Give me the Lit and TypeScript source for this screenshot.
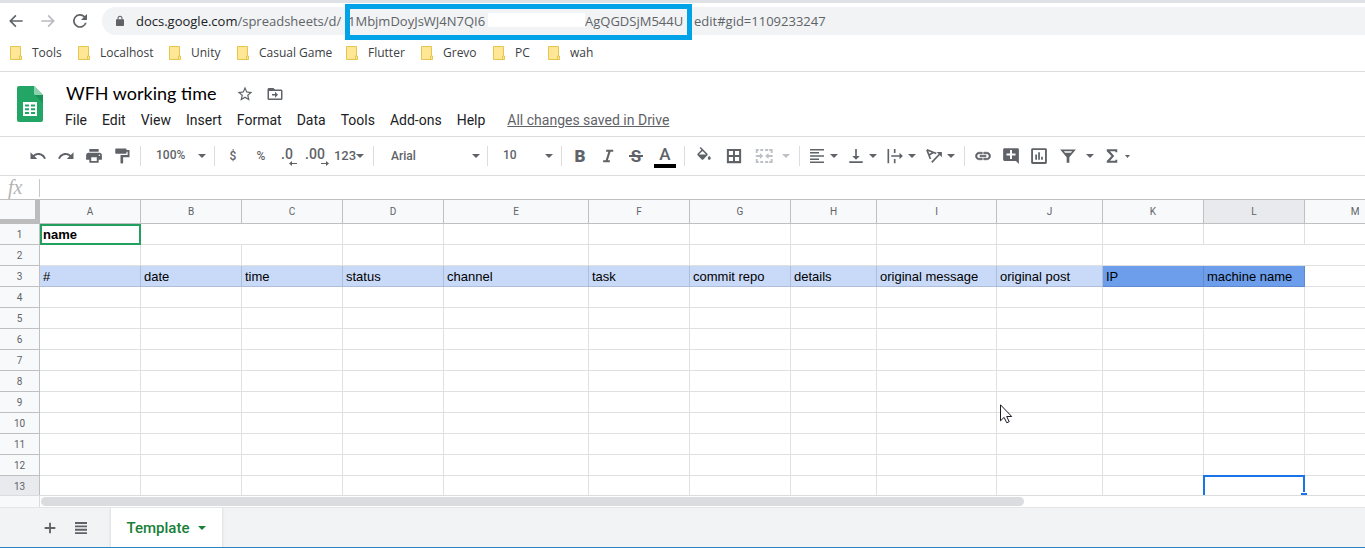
import { LitElement, html, css, svg, nothing } from "lit";
import { customElement, property } from "lit/decorators.js";

const glyphs: Record<string, unknown> = {
  undo: svg`<path d="M12.5 8c-2.65 0-5.05.99-6.9 2.6L2 7v9h9l-3.62-3.62c1.39-1.16 3.16-1.88 5.12-1.88 3.54 0 6.55 2.31 7.6 5.5l2.37-.78C21.08 11.03 17.15 8 12.500 8z"/>`,
  redo: svg`<path d="M18.4 10.6C16.55 8.99 14.15 8 11.5 8c-4.65 0-8.58 3.03-9.96 7.22L3.9 16c1.05-3.19 4.05-5.5 7.6-5.5 1.95 0 3.73.72 5.12 1.88L13 16h9V7l-3.6 3.6z"/>`,
  print: svg`<path d="M19.500 7.500h-15C2.800 7.500 1.500 8.900 1.500 10.500v6.500h4.300v4h12.400v-4h4.300v-6.500c0-1.600-1.300-3-3-3zM15.700 18.700H8.300v-5h7.400v5zM19.200 12c-.6 0-1-.5-1-1s.4-1 1-1 1 .5 1 1-.4 1-1 1zM18.200 2.500H5.800v3.700h12.400V2.500z"/>`,
  paint: svg`<path d="M18 4V3c0-.55-.45-1-1-1H4c-.55 0-1 .45-1 1v5c0 .55.45 1 1 1h13c.55 0 1-.45 1-1V6.300h1.500V10.700H10V21c0 .55.45 1 1 1h1.500c.55 0 1-.45 1-1v-7.500H22V4h-4z"/>`,
  italic: svg`<path d="M9.500 3.500v2.800h3l-3.600 11.200H5.500v2.800h9v-2.800h-2.700l3.600-11.200H19V3.500z"/>`,
  fill: svg`<path d="M16.56 8.94L7.62 0 6.21 1.41l2.38 2.38-5.15 5.15c-.59.59-.59 1.54 0 2.12l5.5 5.5c.29.29.68.44 1.06.44s.77-.15 1.06-.44l5.5-5.5c.59-.58.59-1.53 0-2.12zM5.21 10L10 5.21 14.79 10H5.21zM19 11.5s-2 2.17-2 3.5c0 1.1.9 2 2 2s2-.9 2-2c0-1.33-2-3.5-2-3.5z"/>`,
  borders: svg`<path d="M2.5 2.5v19h19v-19h-19zm8.2 16.3H5.2v-5.5h5.5v5.5zm0-8.1H5.2V5.2h5.5v5.5zm8.1 8.1h-5.5v-5.5h5.5v5.5zm0-8.1h-5.5V5.2h5.5v5.5z"/>`,
  merge: svg`<path d="M1 2.700h4v2.600H3.500V8H1zM7 2.700h4v2.600H7zM13.500 2.700h4v2.600h-4zM19 2.700h4.500V8H21V5.300h-2zM1 16h2.500v2.700H5v2.600H1zM7 18.700h4v2.600H7zM13.500 18.700h4v2.600h-4zM21 16h2.500v5.300H19v-2.600h2zM1 10.800h5.500V8L11 12l-4.500 4v-2.800H1zM23.500 10.800H18V8l-4.500 4 4.500 4v-2.800h5.500z"/>`,
  align: svg`<path d="M2.700 2.700h18.600v2H2.700zM2.700 6.800h12v2h-12zM2.700 11h18.600v2H2.700zM2.700 15.200h12v2h-12zM2.700 19.300h18.600v2H2.700z"/>`,
  valign: svg`<path d="M3 19h18v2.300H3zM10.900 2.500h2.200V12H17l-5 5-5-5h3.900z"/>`,
  wrap: svg`<path d="M2 2.500h2.200v19H2zM10.500 2.500h2.200V8h-2.200zM10.500 16h2.200v5.500h-2.200zM7 10.900h11V7.700l4.500 4.300-4.500 4.300v-3.200H7z"/>`,
  rotate: svg`<path fill="none" stroke="currentColor" stroke-width="2.2" d="M9 20.500L20 9M2.500 3.800L15 8.600M2.500 3.800L7.300 16M5 11L11.500 7"/><path d="M15.500 6.500H22.500v7z"/>`,
  link: svg`<path d="M3.9 12c0-1.71 1.39-3.1 3.1-3.1h4V7H7c-2.76 0-5 2.24-5 5s2.24 5 5 5h4v-1.9H7c-1.71 0-3.1-1.39-3.1-3.1zM8 13h8v-2H8v2zm9-6h-4v1.9h4c1.71 0 3.1 1.39 3.1 3.1s-1.39 3.1-3.1 3.1h-4V17h4c2.76 0 5-2.24 5-5s-2.24-5-5-5z" stroke="currentColor" stroke-width=".9"/>`,
  comment: svg`<path d="M22.5 3c0-1-.8-1.500-1.800-1.500H3.300c-1 0-1.800.8-1.800 1.800v13.400c0 1 .8 1.800 1.800 1.800H18.500l4 4zM18 11.300h-4.700V16h-2.600v-4.700H6V8.700h4.700V4h2.600v4.700H18z"/>`,
  chart: svg`<path d="M3.300 1.500h17.400c1 0 1.800.8 1.800 1.800v17.400c0 1-.8 1.800-1.800 1.800H3.300c-1 0-1.800-.8-1.800-1.800V3.300c0-1 .8-1.800 1.800-1.800zM4 4v16h16V4zM7 10h2.300v7H7zM10.900 7h2.300v10h-2.300zM14.800 13h2.300v4h-2.300z"/>`,
  filter: svg`<path fill-rule="evenodd" d="M1.500 3.200h21l-8.700 10.300V21h-3.600v-7.500zM6.500 5.600l1.600 1.900h7.800l1.600-1.900z"/>`,
  sigma: svg`<path d="M5 3h14v4h-2.500V5.700H9.300l5.700 6.300-5.700 6.300h7.200V17H19v4H5v-2.500l6.300-6.500L5 5.500z"/>`,
  star: svg`<path d="M22 9.240l-7.190-.62L12 2 9.190 8.630 2 9.240l5.460 4.730L5.820 21 12 17.270 18.180 21l-1.630-7.030L22 9.240zM12 15.400l-3.760 2.270 1-4.280-3.320-2.880 4.380-.38L12 6.100l1.710 4.040 4.380.38-3.320 2.880 1 4.280L12 15.400z"/>`,
  folder: svg`<path d="M20 6h-8l-2-2H4c-1.100 0-2 .9-2 2v12c0 1.100.9 2 2 2h16c1.100 0 2-.9 2-2V8c0-1.100-.9-2-2-2zm0 12H4V8h16v10zM12 17l4-4-4-4v3H8v2h4z"/>`,
  back: svg`<path d="M22 10.800H6.300l6.400-6.400L11 2.700 1.700 12l9.300 9.300 1.700-1.700-6.400-6.400H22z"/>`,
  forward: svg`<path d="M2 10.800h15.700l-6.400-6.400L13 2.700l9.300 9.300-9.300 9.300-1.700-1.700 6.400-6.400H2z"/>`,
  reload: svg`<path d="M19.400 4.600A10.400 10.400 0 1 0 22 14.500h-2.700A7.800 7.800 0 1 1 17.500 6.500L13.500 10.500H22.500V1.500z"/>`,
  lock: svg`<path fill-rule="evenodd" d="M18 8.500h-1V6.500a5 5 0 0 0-10 0v2H6c-1.100 0-2 .9-2 2v9.500c0 1.100.9 2 2 2h12c1.100 0 2-.9 2-2v-9.500c0-1.100-.9-2-2-2zM9 8.500v-2a3 3 0 0 1 6 0v2z"/>`,
  plus: svg`<path d="M20 13.400h-6.600V20h-2.800v-6.600H4v-2.800h6.600V4h2.800v6.600H20z"/>`,
  sheets: svg`<path d="M4 4h16v2.500H4zM4 8.500h16V11H4zM4 13h16v2.500H4zM4 17.500h16V20H4z"/>`,
};

@customElement("ui-icon")
export class UiIcon extends LitElement {
  @property() name = "";
  @property({ type: Number }) size = 18;
  static styles = css`
    :host { display: inline-flex; flex: none; }
    svg { display: block; fill: currentColor; }
  `;
  render() {
    return html`<svg viewBox="0 0 24 24" width=${this.size} height=${this.size} aria-hidden="true">${glyphs[this.name]}</svg>`;
  }
}

const caret = html`<svg class="caret" viewBox="0 0 8 4" width="8" height="4" aria-hidden="true"><path d="M0 0h8L4 4z" fill="currentColor"/></svg>`;
const smallCaret = html`<svg class="caret" viewBox="0 0 5 3" width="5" height="3" aria-hidden="true"><path d="M0 0h5L2.500 3z" fill="currentColor"/></svg>`;

@customElement("browser-bar")
export class BrowserBar extends LitElement {
  static styles = css`
    :host { display: block; border-top: 3px solid #dee1e6; border-bottom: 1px solid #dadce0; font-family: "Open Sans", "Noto Sans", sans-serif; color: #5f6368; }
    button { border: 0; background: none; padding: 0; color: inherit; width: 32px; height: 28px; display: flex; align-items: center; justify-content: center; }
    button:disabled { color: #b9bbbe; }
    .nav { display: flex; align-items: center; padding: 4px 0 3px; }
    .omnibox { flex: 1; display: flex; align-items: center; height: 28px; margin-left: 6px; padding-left: 12px; border-radius: 14px 0 0 14px; background: #f1f3f4; }
    .url { display: flex; margin-left: 10px; font-size: 13px; line-height: 20px; white-space: pre; }
    .base { width: 212px; }
    .host { color: #202124; }
    .key { position: relative; display: grid; grid-template-columns: 140px 97px 104px; width: 341px; }
    .key span { min-width: 0; overflow: hidden; }
    .blank { background: #fff; height: 14px; margin-top: 2px; }
    .frame { position: absolute; inset: -7px -3px -9px; border: 5px solid #00a2e8; }
    .rest { padding-left: 5px; }
    nav { display: grid; grid-template-columns: 68px 91px 68px 109px 75px 72px 55px auto; padding: 4px 10px 0; height: 29px; }
    a { display: flex; align-items: center; gap: 10px; height: 22px; font-size: 12px; line-height: 16px; color: #3c4043; text-decoration: none; white-space: nowrap; }
  `;
  render() {
    return html`
      <div class="nav">
        <button aria-label="Back"><ui-icon name="back" size="16"></ui-icon></button>
        <button aria-label="Forward" disabled><ui-icon name="forward" size="16"></ui-icon></button>
        <button aria-label="Reload"><ui-icon name="reload" size="16"></ui-icon></button>
        <div class="omnibox">
          <ui-icon name="lock" size="12"></ui-icon>
          <div class="url"><span class="base"><span class="host">docs.google.com</span>/spreadsheets/d/</span><span class="key"><span>1MbjmDoyJsWJ4N7QI6</span><span class="blank"></span><span>AgQGDSjM544U</span><i class="frame"></i></span><span class="rest">edit#gid=1109233247</span></div>
        </div>
      </div>
      <nav aria-label="Bookmarks">
        ${["Tools", "Localhost", "Unity", "Casual Game", "Flutter", "Grevo", "PC", "wah"].map(
          (name) => html`<a href="#"><svg width="12" height="14" viewBox="0 0 12 14" aria-hidden="true"><path d="M.5.500h10v9.500h1v3.500H.5z" fill="#ffe795" stroke="#e6c54d"/><path d="M9.500 13v-3h1" fill="none" stroke="#e6c54d"/></svg>${name}</a>`
        )}
      </nav>
    `;
  }
}

@customElement("doc-header")
export class DocHeader extends LitElement {
  static styles = css`
    :host { display: flex; height: 64px; border-bottom: 1px solid #dadce0; font-family: Roboto, sans-serif; color: #202124; }
    .logo { margin: 14px 15px 0 17px; flex: none; }
    .body { display: flex; flex-direction: column; padding-top: 8px; }
    .title { display: flex; align-items: center; height: 28px; color: #5f6368; }
    input { width: 172px; border: 0; padding: 0 0 2px 8px; background: none; font: 18px/24px Lato, sans-serif; color: #000; box-sizing: border-box; }
    button { border: 0; background: none; padding: 0; color: inherit; font: inherit; }
    .title button { width: 30px; display: flex; align-items: center; justify-content: center; }
    .menu { display: flex; align-items: center; gap: 1px; height: 24px; font-size: 14px; line-height: 20px; }
    .menu button { padding: 0 7px; }
    .menu a { margin-left: 14px; color: #5f6368; }
  `;
  render() {
    return html`
      <svg class="logo" width="26" height="36" viewBox="0 0 26 36" aria-label="Sheets home">
        <path d="M2 0h15l9 9v25a2 2 0 0 1-2 2H2a2 2 0 0 1-2-2V2a2 2 0 0 1 2-2z" fill="#23a566"/>
        <path d="M18 9h8v8z" fill="#1c9156"/><path d="M17 0l9 9h-7.500a1.500 1.500 0 0 1-1.500-1.500z" fill="#8ed1b1"/>
        <path fill-rule="evenodd" d="M6 16h14v14H6zM8 18.500h4v2H8zM14 18.500h4v2h-4zM8 22.300h4v2H8zM14 22.300h4v2h-4zM8 26h4v2H8zM14 26h4v2h-4z" fill="#fff"/>
      </svg>
      <div class="body">
        <div class="title">
          <input aria-label="Document name" .value=${"WFH working time"}>
          <button aria-label="Star"><ui-icon name="star" size="18"></ui-icon></button>
          <button aria-label="Move"><ui-icon name="folder" size="18"></ui-icon></button>
        </div>
        <div class="menu">
          ${["File", "Edit", "View", "Insert", "Format", "Data", "Tools", "Add-ons", "Help"].map((m) => html`<button>${m}</button>`)}
          <a href="#">All changes saved in Drive</a>
        </div>
      </div>
    `;
  }
}

@customElement("tool-bar")
export class ToolBar extends LitElement {
  static styles = css`
    :host { display: flex; align-items: center; height: 38px; padding-left: 24px; border-bottom: 1px solid #dadce0; font: 12px/16px Roboto, sans-serif; color: #5f6368; }
    button { flex: none; display: flex; align-items: center; justify-content: center; width: 28px; height: 26px; padding: 0; border: 0; background: none; color: inherit; font: inherit; font-weight: 500; }
    button.wide { width: 30px; }
    button.split { width: 39px; justify-content: flex-start; padding-left: 4px; gap: 4px; }
    button.split-wide { width: 46px; justify-content: flex-start; padding-left: 6px; gap: 9px; }
    button.number { width: 38px; font-size: 13px; padding-right: 2px; }
    button.off { color: #bdc1c6; }
    .sep { flex: none; width: 1px; height: 20px; margin: 0 4px; background: #dadce0; }
    .pick { flex: none; display: flex; align-items: center; padding: 0 4px 0 11px; width: 50px; }
    .pick.font { width: 89px; padding-left: 13px; padding-right: 3px; }
    select { flex: 1; min-width: 0; appearance: none; border: 0; padding: 0 0 2px; margin: 0; background: none; color: inherit; font: inherit; font-weight: 500; }
    .font select { padding-bottom: 0; }
    .decimal { display: flex; flex-direction: column; align-items: flex-end; line-height: 13px; font-size: 14px; padding-top: 2px; }
    .decimal span { padding-right: 4px; }
    .letter { position: relative; font-size: 17px; line-height: 18px; font-weight: 900; }
    .strike { font-weight: 700; }
    .strike::after { content: ""; position: absolute; inset: 8px -2px; height: 2px; background: currentColor; }
    .color { font-size: 17px; line-height: 18px; font-weight: 500; padding: 0 5px 1px; border-bottom: 4px solid #000; }
  `;
  private btn(name: string, label: string, cls = "", drop: unknown = nothing) {
    return html`<button class=${cls} aria-label=${label}><ui-icon name=${name} size="18"></ui-icon>${drop}</button>`;
  }
  render() {
    const sep = html`<span class="sep"></span>`;
    const arrow = (d: string) => html`<svg width="8" height="5" viewBox="0 0 8 5" aria-hidden="true"><path d=${d} fill="currentColor"/></svg>`;
    return html`
      ${this.btn("undo", "Undo")}${this.btn("redo", "Redo")}${this.btn("print", "Print")}${this.btn("paint", "Paint format")}
      ${sep}
      <label class="pick"><select aria-label="Zoom"><option>100%</option></select>${caret}</label>
      ${sep}
      <button>$</button><button>%</button>
      <button aria-label="Decrease decimal places"><span class="decimal"><span>.0</span>${arrow("M3 0v2h5v1H3v2L0 2.500z")}</span></button>
      <button aria-label="Increase decimal places"><span class="decimal"><span>.00</span>${arrow("M5 0v2H0v1h5v2l3-2.500z")}</span></button>
      <button class="number" aria-label="More formats">123${caret}</button>
      ${sep}
      <label class="pick font"><select aria-label="Font"><option>Arial</option></select>${caret}</label>
      ${sep}
      <label class="pick"><select aria-label="Font size"><option>10</option></select>${caret}</label>
      ${sep}
      <button aria-label="Bold"><span class="letter">B</span></button>
      ${this.btn("italic", "Italic")}
      <button aria-label="Strikethrough"><span class="letter strike">S</span></button>
      <button class="wide" aria-label="Text color"><span class="color">A</span></button>
      ${sep}
      ${this.btn("fill", "Fill color", "wide")}${this.btn("borders", "Borders", "wide")}${this.btn("merge", "Merge cells", "split-wide off", caret)}
      ${sep}
      ${this.btn("align", "Horizontal align", "split", caret)}${this.btn("valign", "Vertical align", "split", caret)}${this.btn("wrap", "Text wrapping", "split", caret)}${this.btn("rotate", "Text rotation", "split", caret)}
      ${sep}
      ${this.btn("link", "Insert link")}${this.btn("comment", "Insert comment")}${this.btn("chart", "Insert chart")}${this.btn("filter", "Filter", "split-wide", caret)}${this.btn("sigma", "Functions", "split", smallCaret)}
    `;
  }
}

const columns: [string, number][] = [
  ["A", 101], ["B", 101], ["C", 101], ["D", 101], ["E", 145], ["F", 101], ["G", 101],
  ["H", 86], ["I", 120], ["J", 106], ["K", 101], ["L", 101], ["M", 101],
];
const headings = ["#", "date", "time", "status", "channel", "task", "commit repo", "details", "original message", "original post", "IP", "machine name", ""];

@customElement("sheet-grid")
export class SheetGrid extends LitElement {
  static styles = css`
    :host { display: block; position: relative; flex: 1; min-height: 0; overflow: hidden; font-family: "Liberation Sans", Arial, sans-serif; border-bottom: 1px solid #dadce0; }
    table { table-layout: fixed; border-collapse: separate; border-spacing: 0; width: 1406px; }
    th, td { box-sizing: border-box; height: 21px; padding: 0; border-right: 1px solid rgba(0, 0, 0, 0.12); border-bottom: 1px solid rgba(0, 0, 0, 0.12); white-space: nowrap; }
    th { background: #f8f9fa; border-color: #c0c0c0; color: #5f6368; font: 10px/12px Roboto, sans-serif; }
    tbody th { padding-top: 2px; }
    thead th { height: 24px; }
    thead th:first-child { border-right: 5px solid #bcbcbc; border-bottom: 5px solid #bcbcbc; }
    th.on { background: #e8eaed; }
    td { position: relative; padding: 2px 3px 0; font-size: 13px; line-height: 16px; color: #000; text-align: left; }
    td.bold { font-weight: 700; }
    td.pale { background: #c9daf8; }
    td.strong { background: #6d9eeb; }
    .peer, .active { position: absolute; box-sizing: border-box; inset: 0 -1px -1px 0; border: 2px solid #23a05f; }
    .active { inset: -1px; border-color: #1a73e8; }
    .handle { position: absolute; right: -3px; top: 16px; width: 6px; height: 4px; background: #1a73e8; border-top: 1px solid #fff; }
    .pointer { position: absolute; left: 1000px; top: 204px; }
  `;
  private cell(row: number, col: number) {
    if (row === 1 && col === 0) return html`<td class="bold">name<i class="peer"></i></td>`;
    if (row === 1 && col === 1) return html`<td colspan="2"></td>`;
    if (row === 1 && col === 2) return nothing;
    if (row === 2 && col === 10) return html`<td colspan="3"></td>`;
    if (row === 2 && col > 10) return nothing;
    if (row === 3) return html`<td class=${col < 10 ? "pale" : col < 12 ? "strong" : ""}>${headings[col]}</td>`;
    if (row === 13 && col === 11) return html`<td><i class="active"></i><i class="handle"></i></td>`;
    return html`<td></td>`;
  }
  render() {
    return html`
      <table>
        <colgroup><col style="width:40px">${columns.map(([, w]) => html`<col style="width:${w}px">`)}</colgroup>
        <thead><tr><th></th>${columns.map(([n]) => html`<th class=${n === "L" ? "on" : ""}>${n}</th>`)}</tr></thead>
        <tbody>
          ${Array.from({ length: 13 }, (_, i) => i + 1).map(
            (r) => html`<tr><th class=${r === 13 ? "on" : ""}>${r}</th>${columns.map((_, c) => this.cell(r, c))}</tr>`
          )}
        </tbody>
      </table>
      <svg class="pointer" width="13" height="20" viewBox="0 0 13 20" aria-hidden="true"><path d="M.5.800v16l3.600-3.400 2.700 5.400 2.400-1.100-2.500-5.200h5z" fill="#fff" stroke="#1b1b28"/></svg>
    `;
  }
}

@customElement("app-root")
export class AppRoot extends LitElement {
  static styles = css`
    :host { display: flex; flex-direction: column; height: 100vh; overflow: hidden; background: #fff; font-family: Roboto, sans-serif; box-sizing: border-box; border-bottom: 1px solid #2a83c7; }
    .formula { display: flex; align-items: center; height: 23px; border-bottom: 1px solid #c0c0c0; flex: none; }
    .formula label { width: 31px; padding: 0 0 2px 8px; font: italic 20px/20px "Liberation Serif", serif; color: #b4b4b4; }
    .formula input { flex: 1; height: 18px; box-sizing: border-box; border: 0; border-left: 1px solid #c6c6c6; padding: 0 6px; background: none; font: 13px/16px "Liberation Sans", sans-serif; }
    .scroll { flex: none; display: flex; height: 11px; border-bottom: 1px solid #e4e5e7; }
    .scroll span { width: 39px; background: #f8f9fa; border-right: 1px solid #dadce0; }
    .thumb { width: 72%; margin: 1px; border-radius: 5px; background: #dadce0; }
    .tabs { flex: none; display: flex; height: 39px; padding-left: 34px; background: #f1f3f4; color: #5f6368; }
    button { display: flex; align-items: center; justify-content: center; width: 31px; padding: 0; border: 0; background: none; color: inherit; }
    .tabs .tab { width: 111px; margin-left: 15px; gap: 9px; background: #fff; color: #188038; font: 500 15px/20px Roboto, sans-serif; box-shadow: 0 0 2px 1px #dfe1e5; clip-path: inset(0 -3px); }
  `;
  render() {
    return html`
      <browser-bar></browser-bar>
      <doc-header></doc-header>
      <tool-bar></tool-bar>
      <div class="formula"><label for="fx">fx</label><input id="fx" aria-label="Formula"></div>
      <sheet-grid></sheet-grid>
      <div class="scroll"><span></span><div class="thumb"></div></div>
      <div class="tabs">
        <button aria-label="Add sheet"><ui-icon name="plus" size="16"></ui-icon></button>
        <button aria-label="All sheets"><ui-icon name="sheets" size="18"></ui-icon></button>
        <button class="tab">Template${caret}</button>
      </div>
    `;
  }
}
